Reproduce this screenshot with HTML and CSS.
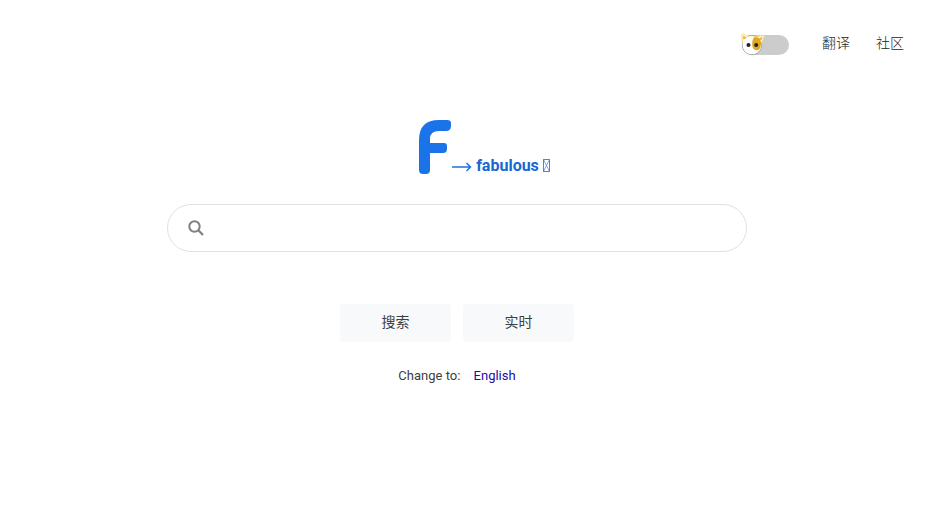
FILE: index.html
```html
<!DOCTYPE html>
<html lang="zh-CN">
<head>
    <meta charset="UTF-8">
    <meta name="viewport" content="width=device-width, initial-scale=1.0">
    <title>fabulous</title>
    <link rel="stylesheet" href="styles.css">
</head>
<body>

    <header class="header">
        <label class="switch">
            <input type="checkbox" class="switch-input" aria-label="Theme">
            <svg class="switch-cat" width="24" height="24" viewBox="0 0 24 24" aria-hidden="true">
                <circle cx="11" cy="13" r="9.8" fill="#fff" stroke="#999" stroke-width=".8"/>
                <path d="M1.5 11 L.8 3.4 Q.8 1.600 2.600 2.200 L8 5 Q12 3.800 16 4.800 L21 3.400 Q23.800 3 23 5.400 L20.5 11 Z" fill="#fff" stroke="#f3d16a" stroke-width=".9"/>
                <path d="M2.200 7.500 L2 3.600 L6.500 6 Z M17.500 6.500 L22 4.500 L20.300 8.500 Z" fill="#efb62c"/>
                <circle cx="10.500" cy="13" r="8.800" fill="#fff"/>
                <path d="M12.500 6 Q14 4.500 17 5.500 Q20.500 8 20 12 Q19.500 18 16.500 18.200 Q12 18.500 11.200 13.500 Q10.800 8.500 12.500 6 Z" fill="#e0a820"/>
                <circle cx="7.500" cy="13" r="2" fill="#222"/>
                <circle cx="15.200" cy="13" r="2" fill="#222"/>
            </svg>
        </label>
        <nav class="nav">
            <a href="#">翻译</a>
            <a href="#">社区</a>
        </nav>
    </header>

    <main class="main">
        <div class="logo">
            <svg width="32" height="54" viewBox="0 0 32 54" role="img" aria-label="F">
                <path d="M0 20 Q0 0 20 0 H28 Q32 0 32 3 V6 Q32 11 27 11 H20 Q11 11 11 19 V23 H25 Q28 23 28 26 V29 Q28 33 24 33 H11 V50 Q11 54 7 54 H4 Q0 54 0 50 Z" fill="#1a73e8"/>
            </svg>
            <svg class="arrow" width="20" height="10" viewBox="0 0 20 10" aria-hidden="true">
                <path d="M0 5 H18.5 M14.5 1 L18.5 5 L14.5 9" fill="none" stroke="#1a73e8" stroke-width="1.5"/>
            </svg>
            <span class="logo-text">fabulous</span>
            <svg class="glyph" width="7" height="13" viewBox="0 0 7 13" aria-hidden="true">
                <path d="M.5 .5 H6.5 V12.5 H.5 Z" fill="none" stroke="#1967d2" stroke-width=".8"/>
                <path d="M.5 .5 L6.5 12.5 M6.5 .5 L.5 12.5" stroke="#1967d2" stroke-width=".8" opacity=".7"/>
            </svg>
        </div>

        <form class="search">
            <label class="search-box">
                <svg width="16" height="16" viewBox="0 0 16 16" aria-hidden="true">
                    <circle cx="6.5" cy="6.5" r="5.2" fill="none" stroke="#808080" stroke-width="2"/>
                    <path d="M10.3 10.3 L15 15" stroke="#808080" stroke-width="2.2"/>
                </svg>
                <input type="text" class="search-input" aria-label="搜索">
            </label>
            <div class="buttons">
                <button type="submit" class="btn">搜索</button>
                <button type="button" class="btn">实时</button>
            </div>
        </form>

        <p class="language">Change to: <a href="#">English</a></p>
    </main>

</body>
</html>
```
FILE: styles.css
```css
* {
    margin: 0;
    padding: 0;
    box-sizing: border-box;
}

body {
    font-family: Roboto, "Noto Sans CJK SC", sans-serif;
    background-color: #fff;
    color: #3c4043;
    padding-right: 13px;
}

.header {
    display: flex;
    justify-content: flex-end;
    align-items: center;
    gap: 33px;
    height: 90px;
    padding-right: 10px;
}

.switch {
    position: relative;
    display: flex;
    cursor: pointer;
}

.switch-input {
    appearance: none;
    width: 47px;
    height: 20px;
    border-radius: 10px;
    background-color: #ccc;
    cursor: pointer;
}

.switch-cat {
    position: absolute;
    left: -1px;
    top: -3px;
    transition: transform 0.3s;
}

.switch-input:checked + .switch-cat {
    transform: translateX(24px);
}

.nav {
    display: flex;
    gap: 26px;
    padding-bottom: 4px;
}

.nav a {
    color: #222;
    font-size: 14px;
    font-weight: 300;
    line-height: 20px;
    text-decoration: none;
}

.main {
    display: flex;
    flex-direction: column;
    align-items: center;
    padding-top: 30px;
}

.logo {
    display: flex;
    align-items: flex-end;
    margin-left: 55px;
    margin-bottom: 30px;
}

.arrow {
    margin: 0 4px 2px 1px;
}

.logo-text {
    color: #1967d2;
    font-size: 16px;
    font-weight: 700;
    line-height: 16px;
}

.glyph {
    margin: 0 0 2px 4px;
}

.search {
    width: 100%;
    max-width: 580px;
}

.search-box {
    display: flex;
    align-items: center;
    gap: 14px;
    height: 48px;
    padding: 0 20px;
    border: 1px solid #dfe1e5;
    border-radius: 24px;
}

.search-input {
    flex: 1;
    border: none;
    outline: none;
    background: transparent;
    font-family: inherit;
    font-size: 16px;
}

.buttons {
    display: flex;
    justify-content: center;
    gap: 12px;
    margin-top: 52px;
}

.btn {
    width: 111px;
    height: 38px;
    padding-bottom: 4px;
    border: none;
    border-radius: 4px;
    background-color: #f8f9fa;
    color: #3c4043;
    font-family: inherit;
    font-size: 14px;
    cursor: pointer;
}

.language {
    margin-top: 24px;
    font-size: 13px;
    line-height: 20px;
}

.language a {
    margin-left: 10px;
    color: #1a0dab;
    text-decoration: none;
}
```
